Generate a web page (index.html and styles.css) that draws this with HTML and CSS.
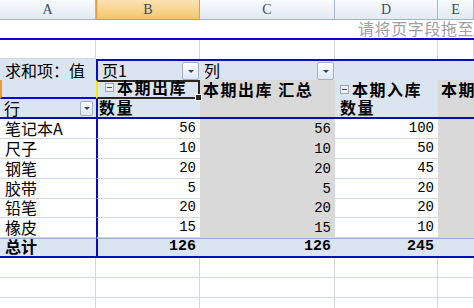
FILE: index.html
```html
<!DOCTYPE html>
<html>
<head>
    <title>数据透视表</title>
    <link rel="stylesheet" href="styles.css">
</head>
<body>
<div class="sheet">
    <!-- column headers -->
    <div class="colhead">A</div>
    <div class="colhead current">B</div>
    <div class="colhead">C</div>
    <div class="colhead">D</div>
    <div class="colhead">E</div>

    <!-- page field drop zone -->
    <div class="pagezone"><span class="hint">请将页字段拖至此处</span></div>

    <!-- row 2 -->
    <div class="cell"></div>
    <div class="cell open"></div>
    <div class="cell open"></div>
    <div class="cell open"></div>
    <div class="cell open"></div>

    <!-- row 3: field buttons -->
    <div class="pv label">求和项：值</div>
    <div class="pv top edge field">页1<span class="drop big"></span></div>
    <div class="pv top field">列<span class="drop big"></span></div>
    <div class="pv top"></div>
    <div class="pv top"></div>

    <!-- row 4 -->
    <div class="pv rowzone"></div>
    <div class="pv sel head"><span class="collapse"></span>本期出库<span class="handle"></span></div>
    <div class="gray head sum">本期出库 汇总</div>
    <div class="pv head indent"><span class="collapse"></span>本期入库</div>
    <div class="gray head sum clip">本期入库 汇总</div>

    <!-- row 5 -->
    <div class="pv line field">行<span class="drop small"></span></div>
    <div class="pv line edge head tight">数量</div>
    <div class="gray line"></div>
    <div class="pv line head indent">数量</div>
    <div class="gray line"></div>

    <!-- data -->
    <div class="item">笔记本A</div><div class="num white edge">56</div><div class="num gray">56</div><div class="num white">100</div><div class="gray"></div>
    <div class="item">尺子</div><div class="num white edge">10</div><div class="num gray">10</div><div class="num white">50</div><div class="gray"></div>
    <div class="item">钢笔</div><div class="num white edge">20</div><div class="num gray">20</div><div class="num white">45</div><div class="gray"></div>
    <div class="item">胶带</div><div class="num white edge">5</div><div class="num gray">5</div><div class="num white">20</div><div class="gray"></div>
    <div class="item">铅笔</div><div class="num white edge">20</div><div class="num gray">20</div><div class="num white">20</div><div class="gray"></div>
    <div class="item">橡皮</div><div class="num white edge">15</div><div class="num gray">15</div><div class="num white">10</div><div class="gray"></div>

    <!-- grand total -->
    <div class="total label">总计</div>
    <div class="total num edge">126</div>
    <div class="total num">126</div>
    <div class="total num">245</div>
    <div class="total"></div>

    <!-- empty rows below -->
    <div class="cell"></div><div class="cell"></div><div class="cell"></div><div class="cell"></div><div class="cell"></div>
    <div class="cell"></div><div class="cell"></div><div class="cell"></div><div class="cell"></div><div class="cell"></div>
    <div class="cell"></div><div class="cell"></div><div class="cell"></div><div class="cell"></div><div class="cell"></div>
</div>
</body>
</html>
```

FILE: styles.css
```css
body {
    margin: 0;
    width: 474px;
    height: 308px;
    overflow: hidden;
    background: #fff;
}

.sheet {
    display: grid;
    grid-template-columns: 96px 104px 135px 103px 36px;
    grid-template-rows: 20px 20px 19px 21px 19px 20px 20px 20px 20px 20px 19px 20px 20px 20px 20px 20px;
    font-family: "Noto Sans CJK SC", sans-serif;
    font-size: 16px;
    line-height: 17px;
    color: #000;
    overflow: hidden;
}

.sheet > div {
    box-sizing: border-box;
    display: flex;
    align-items: flex-end;
    min-width: 0;
    white-space: nowrap;
    padding-bottom: 1px;
}

/* column headers */
.colhead {
    background: linear-gradient(#f9fbfd, #e2e9f3);
    border-right: 1px solid #9eb6ce;
    border-bottom: 1px solid #9eb6ce;
    justify-content: center;
    font-family: "Liberation Serif", serif;
    font-size: 14px;
    color: #3a4d66;
}

.sheet > .colhead {
    align-items: center;
    padding-bottom: 0;
}

.colhead.current {
    background: linear-gradient(#fbe3b4, #f3c56b);
    border-left: 1px solid #f29536;
    border-right-color: #f29536;
    border-bottom-color: #f29536;
}

/* plain grid cells */
.cell {
    background: #fff;
    border-right: 1px solid #d0d7e5;
    border-bottom: 1px solid #d0d7e5;
}

.cell.open {
    border-bottom: none;
}

.pagezone {
    grid-column: 1 / -1;
    background: #fff;
    border-bottom: 2px solid #0b0bc6;
    padding-left: 358px;
    overflow: hidden;
}

.hint {
    color: #a0a0a0;
    letter-spacing: 0.6px;
}

/* pivot areas */
.pv {
    background: #dbe5f1;
    padding-left: 4px;
}

.top {
    border-top: 2px solid #0b0bc6;
}

.edge {
    border-left: 2px solid #0b0bc6;
}

.line {
    border-bottom: 2px solid #0b0bc6;
}

.label {
    padding-left: 5px;
}

.sheet > .field {
    align-items: center;
    padding-bottom: 0;
}

.rowzone {
    border-left: 2px solid #f29536;
    border-bottom: 2px solid #0b0bc6;
}

.head {
    font-weight: bold;
    letter-spacing: 1.5px;
}

.tight {
    padding-left: 1px;
}

.indent {
    padding-left: 5px;
}

.sum {
    padding-left: 3px;
}

.clip {
    overflow: hidden;
}

.gray {
    background: #d9d9d9;
}

.white {
    background: #fff;
    border-bottom: 1px solid #d0d7e5;
}

.item {
    background: #fff;
    border-bottom: 1px solid #d0d7e5;
    padding-left: 5px;
}

.num {
    justify-content: flex-end;
    padding-right: 4px;
    font-family: "Liberation Mono", monospace;
    font-size: 14px;
}

.total {
    background: #dbe5f1;
    border-top: 1px solid #95b3d7;
    border-bottom: 2px solid #0b0bc6;
    font-weight: bold;
}

.total.num {
    font-size: 15px;
}

/* selected cell */
.sel {
    position: relative;
    z-index: 1;
    border: 2px solid #2b2620;
    border-left-color: #f2ee00;
    padding-left: 7px;
}

.handle {
    position: absolute;
    right: -4px;
    bottom: -4px;
    width: 5px;
    height: 5px;
    background: #2b2620;
    border: 1px solid #fff;
}

/* small widgets */
.collapse {
    position: relative;
    width: 9px;
    height: 9px;
    box-sizing: border-box;
    border: 1px solid #9aa5b8;
    background: #eef0f4;
    margin: 0 3px 4px 0;
}

.collapse::after {
    content: "";
    position: absolute;
    left: 1px;
    right: 1px;
    top: 3px;
    height: 1px;
    background: #4a4a4a;
}

.drop {
    position: relative;
    margin-left: auto;
    box-sizing: border-box;
    border: 1px solid #9fb0c9;
    border-radius: 2px;
    background: linear-gradient(#ffffff, #dfe7f2);
}

.drop.big {
    width: 17px;
    height: 18px;
    margin-right: 1px;
}

.drop.small {
    width: 13px;
    height: 15px;
    margin-right: 3px;
}

.drop::after {
    content: "";
    position: absolute;
    left: 50%;
    top: 50%;
    margin: -1px 0 0 -3px;
    border-left: 3px solid transparent;
    border-right: 3px solid transparent;
    border-top: 3px solid #2a4378;
}
```
